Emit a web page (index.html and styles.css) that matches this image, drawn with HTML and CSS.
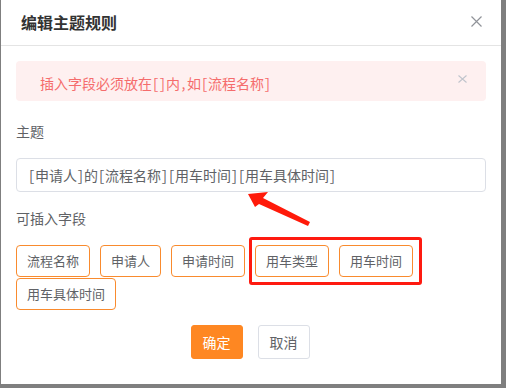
FILE: index.html
```html
<!DOCTYPE html>
<html lang="zh">
<head>
<meta charset="utf-8">
<link rel="stylesheet" href="styles.css">
</head>
<body>
<div class="dialog">
  <div class="header">
    <span class="title">编辑主题规则</span>
    <svg class="close" width="11" height="11" viewBox="0 0 11 11"><path d="M0.5 0.5L10.5 10.5M10.5 0.5L0.5 10.5" stroke="#909399" stroke-width="1.2" fill="none"/></svg>
  </div>
  <div class="body">
    <div class="alert">
      <span class="alert-text">插入字段必须放在[]内,如[流程名称]</span>
      <svg class="alert-close" width="9" height="8" viewBox="0 0 9 8"><path d="M0.5 0.5L8.5 7.5M8.5 0.5L0.5 7.5" stroke="#c0c4cc" stroke-width="1.1" fill="none"/></svg>
    </div>
    <div class="label label-subject">主题</div>
    <div class="input">[申请人]的[流程名称][用车时间][用车具体时间]</div>
    <div class="label label-fields">可插入字段</div>
    <div class="tags">
      <span class="tag">流程名称</span>
      <span class="tag">申请人</span>
      <span class="tag">申请时间</span>
      <span class="tag">用车类型</span>
      <span class="tag">用车时间</span>
      <span class="tag">用车具体时间</span>
    </div>
    <div class="footer">
      <button class="btn btn-primary">确定</button>
      <button class="btn">取消</button>
    </div>
  </div>
  <div class="highlight"></div>
  <svg class="arrow" width="70" height="40" viewBox="0 0 70 40"><polygon points="0,2 20,0 15,6 62,30 60,34 11,12 7,15" fill="#ff1a0a"/></svg>
</div>
</body>
</html>
```
FILE: styles.css
```css
* { box-sizing: border-box; }
html, body { margin: 0; padding: 0; }
body {
  background: #7f7f7f;
  width: 506px;
  height: 388px;
  overflow: hidden;
  font-family: "Noto Sans CJK SC", "Noto Sans", sans-serif;
}
.dialog {
  position: relative;
  margin-left: 1px;
  width: 500px;
  height: 384px;
  background: #fff;
}
.header {
  height: 46px;
  border-bottom: 1px solid #e4e4e4;
  display: flex;
  align-items: center;
  justify-content: space-between;
  padding: 0 19px 1px 20px;
}
.title {
  font-size: 16px;
  font-weight: bold;
  color: #333;
  line-height: 20px;
}
.close { margin-top: -2px; }
.body {
  padding: 15px 15px 0 15px;
}
.alert {
  height: 40px;
  background: #fef0f0;
  border-radius: 4px;
  display: flex;
  align-items: center;
  justify-content: space-between;
  padding: 0 19px 0 24px;
}
.alert-text {
  color: #f56c6c;
  font-family: "Noto Sans Mono CJK SC", "Liberation Mono", "Noto Sans CJK SC", monospace;
  font-size: 14px;
  line-height: 20px;
  margin-top: 4px;
}
.alert-close { margin-top: -5px; }
.label {
  font-size: 14px;
  line-height: 20px;
  color: #606266;
}
.label-subject { margin-top: 20px; }
.input {
  margin-top: 17px;
  height: 34px;
  border: 1px solid #dcdfe6;
  border-radius: 4px;
  padding: 0 11px;
  font-family: "Noto Sans Mono CJK SC", "Liberation Mono", "Noto Sans CJK SC", monospace;
  font-size: 14px;
  line-height: 32px;
  color: #606266;
  width: 470px;
}
.label-fields { margin-top: 16px; }
.tags {
  margin-top: 17px;
  display: flex;
  flex-wrap: wrap;
  column-gap: 10px;
  row-gap: 1px;
  width: 470px;
}
.tag {
  height: 32px;
  border: 1px solid #f98b2e;
  border-radius: 4px;
  padding: 0 10px;
  font-size: 13px;
  line-height: 30px;
  color: #606266;
}
.footer {
  margin-top: 15px;
  display: flex;
  justify-content: center;
  gap: 15px;
  padding-right: 2px;
}
.btn {
  height: 34px;
  padding: 0 11px;
  font-family: inherit;
  font-size: 14px;
  border: 1px solid #dcdfe6;
  border-radius: 3px;
  background: #fff;
  color: #606266;
}
.btn-primary {
  background: #fe8722;
  border-color: #fe8722;
  color: #fff;
}
.highlight {
  position: absolute;
  left: 248px;
  top: 237px;
  width: 173px;
  height: 48px;
  border: 3px solid #fe1a10;
  border-radius: 3px;
}
.arrow {
  position: absolute;
  left: 247px;
  top: 192px;
}
```
